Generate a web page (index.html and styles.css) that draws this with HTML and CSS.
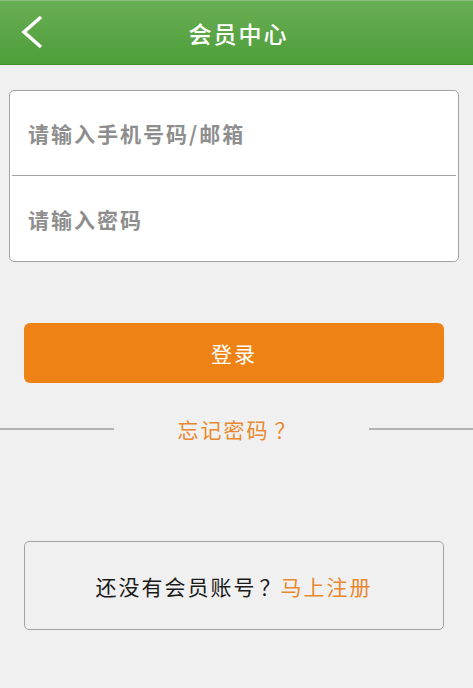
FILE: index.html
```html
<!DOCTYPE html>
<html lang="zh-CN">
<head>
  <meta charset="UTF-8">
  <meta name="viewport" content="width=device-width, initial-scale=1.0">
  <title>会员中心</title>
  <link rel="stylesheet" href="styles.css">
</head>
<body>
  <header class="topbar">
    <a href="#" class="back">
      <svg width="24" height="36" viewBox="0 0 24 36">
        <polyline points="21,2 4,17 21,32" fill="none" stroke="#fff" stroke-width="3.5"/>
      </svg>
    </a>
    <h1>会员中心</h1>
  </header>
  <main>
    <form class="login">
      <div class="fields">
        <input type="text" placeholder="请输入手机号码/邮箱">
        <input type="password" placeholder="请输入密码">
      </div>
      <button type="submit" class="btn">登录</button>
    </form>
    <div class="forgot">
      <span class="line"></span>
      <a href="#">忘记密码<span class="q">？</span></a>
      <span class="line"></span>
    </div>
    <div class="register">
      还没有会员账号<span class="q">？</span><a href="#">马上注册</a>
    </div>
  </main>
</body>
</html>
```

FILE: styles.css
```css
* {
  padding: 0;
  margin: 0;
  box-sizing: border-box;
}
body {
  min-height: 100vh;
  background-color: #f0f0f0;
  font-family: "Noto Sans CJK SC", "Noto Sans", sans-serif;
}
.topbar {
  height: 65px;
  display: flex;
  align-items: center;
  justify-content: center;
  position: relative;
  background: linear-gradient(#68ae55, #4f9e3a);
  border-top: 1px solid #8dbf7f;
  border-bottom: 1px solid #408f2e;
}
.topbar h1 {
  color: #fff;
  font-size: 23px;
  font-weight: 500;
  letter-spacing: 2px;
  margin-left: 4px;
}
.back {
  position: absolute;
  left: 20px;
  top: 14px;
  display: block;
}
main {
  padding: 25px 0 0;
}
.fields {
  margin: 0 14px 0 9px;
  background-color: #fff;
  border: 1px solid #a3a3a3;
  border-radius: 5px;
  padding: 0 2px;
}
.fields input {
  display: block;
  width: 100%;
  height: 85px;
  border: none;
  outline: none;
  background: transparent;
  padding: 0 16px;
  font-family: inherit;
  font-size: 21px;
  letter-spacing: 2px;
}
.fields input:first-child {
  border-bottom: 1px solid #a3a3a3;
}
.fields input::placeholder {
  color: #8e8e8e;
  font-weight: 700;
}
.btn {
  display: block;
  width: 420px;
  height: 60px;
  margin: 61px 0 0 24px;
  border: none;
  border-radius: 6px;
  background-color: #ef8214;
  color: #fff;
  font-family: inherit;
  font-size: 21px;
  letter-spacing: 2px;
}
.forgot {
  display: flex;
  align-items: center;
  margin-top: 31px;
}
.forgot .line {
  height: 2px;
  background-color: #b3b3b3;
}
.forgot .line:first-child {
  width: 114px;
}
.forgot .line:last-child {
  flex: 1;
}
.forgot a {
  width: 255px;
  padding-right: 8px;
  text-align: center;
  color: #e8892f;
  text-decoration: none;
  font-size: 21px;
  letter-spacing: 2px;
}
.q {
  margin-left: 5px;
}
.register {
  width: 420px;
  height: 89px;
  margin: 97px 0 0 24px;
  border: 1px solid #a3a3a3;
  border-radius: 5px;
  display: flex;
  align-items: center;
  justify-content: center;
  font-size: 21px;
  letter-spacing: 2px;
  color: #1a1a1a;
}
.register .q {
  margin-left: 3px;
  letter-spacing: 0;
}
.register a {
  color: #e8892f;
  text-decoration: none;
}
```
